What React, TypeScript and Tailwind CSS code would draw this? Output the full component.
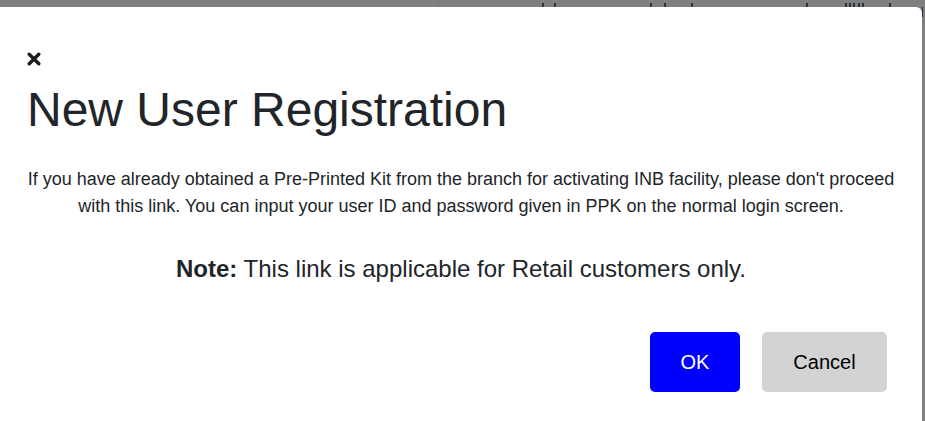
import React from "react";

const marks = [542, 554, 650, 664, 691, 806, 845, 849, 853, 858, 862, 889];

export default function App() {
  return (
    <div
      className="w-[925px] h-[421px] overflow-hidden bg-[#7f7f7f] flex flex-col"
      style={{ fontFamily: '"Liberation Sans", Arial, sans-serif' }}
    >
      {/* backdrop strip above the modal: bottoms of the page text behind the overlay */}
      <div className="relative h-[7px] shrink-0 overflow-hidden">
        <div className="absolute left-[433px] top-0 h-full w-px bg-[#858585]" />
        <div className="absolute left-[509px] top-0 h-full w-px bg-[#858585]" />
        {marks.map((x) => (
          <div
            key={x}
            className="absolute top-[3px] h-[4px] w-[2px] bg-[#2a3440]"
            style={{ left: x }}
          />
        ))}
      </div>
      <div className="flex flex-1 min-h-0">
        <div className="w-[922px] shrink-0 bg-white rounded-tr-[6px] flex flex-col px-[27px] pt-[45px]">
          <button className="w-[14px] h-[14px] text-[#1a1a1a] self-start" aria-label="Close">
            <svg width="14" height="14" viewBox="0 0 14 14">
              <path
                d="M2.2 2.2 L11.8 11.8 M11.8 2.2 L2.2 11.8"
                stroke="currentColor"
                strokeWidth="3.4"
                strokeLinecap="round"
              />
            </svg>
          </button>
          <h1 className="mt-[15px] text-[48px] leading-[58px] font-normal text-[#212529]">
            New User Registration
          </h1>
          <p className="mt-[27px] text-[18px] leading-[27px] text-center text-[#212529]">
            If you have already obtained a Pre-Printed Kit from the branch for activating INB facility, please don't
            proceed with this link. You can input your user ID and password given in PPK on the normal login screen.
          </p>
          <div className="mt-[31px] text-[24px] leading-[36px] text-center text-[#212529]">
            <span className="font-bold">Note:</span> This link is applicable for Retail customers only.
          </div>
          <div className="mt-[45px] flex justify-end gap-[22px] pr-[8px]">
            <button className="w-[90px] h-[60px] rounded-[5px] bg-[#0000ff] text-white text-[20px]">OK</button>
            <button className="w-[125px] h-[60px] rounded-[5px] bg-[#d3d3d3] text-black text-[20px]">Cancel</button>
          </div>
        </div>
        <div className="flex-1 relative">
          <div className="absolute left-0 top-0 w-px h-[10px] bg-[#1c3550]" />
        </div>
      </div>
    </div>
  );
}
